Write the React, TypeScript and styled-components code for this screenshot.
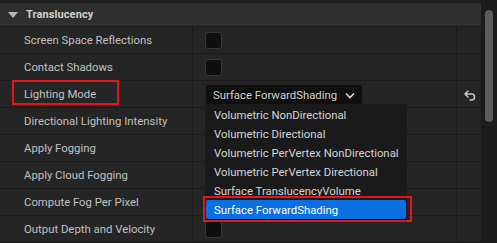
import React from "react";
import styled, { createGlobalStyle } from "styled-components";

const Global = createGlobalStyle`
  html, body { margin: 0; padding: 0; background: #1a1a1a; }
  body { font-family: Roboto, "Noto Sans", sans-serif; }
`;

const Frame = styled.div`
  width: 497px;
  height: 243px;
  display: flex;
  overflow: hidden;
  background: #1a1a1a;
  position: relative;
`;

const Panel = styled.div`
  width: 481px;
  display: flex;
  flex-direction: column;
  padding-top: 3px;
  background: #1d1d1d;
`;

const Header = styled.div`
  height: 23px;
  flex: none;
  display: flex;
  align-items: center;
  gap: 8px;
  padding-left: 8px;
  background: #2f2f2f;
  border-bottom: 1px solid #1b1b1b;
  color: #d2d2d2;
  font-size: 11px;
  font-weight: 700;
  letter-spacing: 0.1px;
`;

const Row = styled.div`
  height: 26px;
  flex: none;
  display: grid;
  grid-template-columns: 193px 264px 24px;
  background: #252525;
  border-bottom: 1px solid #1a1a1a;
`;

const NameCell = styled.div`
  display: flex;
  align-items: center;
  padding-left: 24px;
  color: #c2c2c2;
  font-size: 11.35px;
  border-right: 1px solid #1b1b1b;
  white-space: nowrap;
  position: relative;
`;

const ValueCell = styled.div`
  display: flex;
  align-items: center;
  padding-left: 12px;
  border-right: 1px solid #1b1b1b;
`;

const ResetCell = styled.div`
  display: flex;
  align-items: center;
  justify-content: center;
  padding-left: 2px;
  padding-top: 2px;
`;

const Check = styled.div`
  width: 15px;
  height: 15px;
  border: 1px solid #383838;
  border-radius: 3px;
  background: #0f0f0f;
`;

const Combo = styled.div`
  margin-left: 1px;
  margin-top: 2px;
  width: 156px;
  height: 20px;
  box-sizing: border-box;
  display: flex;
  align-items: center;
  gap: 8px;
  padding-left: 7px;
  background: #0f0f0f;
  border-radius: 3px;
  color: #d0d0d0;
  font-size: 11.35px;
`;

const Highlight = styled.div<{ $l: number; $t: number; $w: number; $h: number }>`
  position: absolute;
  left: ${(p) => p.$l}px;
  top: ${(p) => p.$t}px;
  width: ${(p) => p.$w}px;
  height: ${(p) => p.$h}px;
  border: 2px solid #e8141c;
  box-sizing: border-box;
  pointer-events: none;
`;

const Menu = styled.div`
  position: absolute;
  left: 205px;
  top: 104px;
  width: 202px;
  height: 117px;
  box-sizing: border-box;
  padding: 1px;
  background: #1a1a1a;
  display: flex;
  flex-direction: column;
`;

const Item = styled.div<{ $sel?: boolean }>`
  height: 19px;
  flex: none;
  display: flex;
  align-items: center;
  padding-left: 8px;
  font-size: 11.35px;
  white-space: nowrap;
  color: ${(p) => (p.$sel ? "#ffffff" : "#d6d6d6")};
  background: ${(p) => (p.$sel ? "#0a70e0" : "transparent")};
  border-radius: ${(p) => (p.$sel ? "2px" : "0")};
`;

const Track = styled.div`
  width: 16px;
  background: #1c1c1c;
  display: flex;
  justify-content: center;
  padding-top: 10px;
`;

const Thumb = styled.div`
  width: 8px;
  height: 112px;
  border-radius: 4px;
  background: #5d5d5d;
`;

const Triangle = () => (
  <svg width="10" height="6" viewBox="0 0 10 6">
    <path d="M0 0 H10 L5 6 Z" fill="#b8b8b8" />
  </svg>
);

const Chevron = () => (
  <svg width="10" height="7" viewBox="0 0 10 7">
    <path d="M1 1.5 L5 5.5 L9 1.5" fill="none" stroke="#d8d8d8" strokeWidth="1.6" />
  </svg>
);

const Revert = () => (
  <svg width="12" height="11" viewBox="0 0 12 11">
    <path
      d="M4 1 L1 4 L4 7 M1 4 H7.5 A3 3 0 0 1 7.5 10 H6"
      fill="none"
      stroke="#c8c8c8"
      strokeWidth="1.5"
      strokeLinecap="round"
      strokeLinejoin="round"
    />
  </svg>
);

type RowDef = { name: string; kind: "check" | "combo" | "none" };

const rows: RowDef[] = [
  { name: "Screen Space Reflections", kind: "check" },
  { name: "Contact Shadows", kind: "check" },
  { name: "Lighting Mode", kind: "combo" },
  { name: "Directional Lighting Intensity", kind: "none" },
  { name: "Apply Fogging", kind: "none" },
  { name: "Apply Cloud Fogging", kind: "none" },
  { name: "Compute Fog Per Pixel", kind: "none" },
  { name: "Output Depth and Velocity", kind: "check" },
];

const options = [
  "Volumetric NonDirectional",
  "Volumetric Directional",
  "Volumetric PerVertex NonDirectional",
  "Volumetric PerVertex Directional",
  "Surface TranslucencyVolume",
  "Surface ForwardShading",
];

export default function App() {
  return (
    <>
      <Global />
      <Frame>
        <Panel>
          <Header>
            <Triangle />
            <span>Translucency</span>
          </Header>
          {rows.map((r) => (
            <Row key={r.name}>
              <NameCell>
                {r.name}
                {r.kind === "combo" && <Highlight $l={12} $t={-1} $w={107} $h={25} />}
              </NameCell>
              <ValueCell>
                {r.kind === "check" && <Check />}
                {r.kind === "combo" && (
                  <Combo>
                    <span>Surface ForwardShading</span>
                    <Chevron />
                  </Combo>
                )}
              </ValueCell>
              <ResetCell>{r.kind === "combo" && <Revert />}</ResetCell>
            </Row>
          ))}
        </Panel>
        <Track>
          <Thumb />
        </Track>
        <Menu>
          {options.map((o, i) => (
            <Item key={o} $sel={i === options.length - 1}>
              {o}
            </Item>
          ))}
        </Menu>
        <Highlight $l={203} $t={196} $w={209} $h={26} />
      </Frame>
    </>
  );
}
